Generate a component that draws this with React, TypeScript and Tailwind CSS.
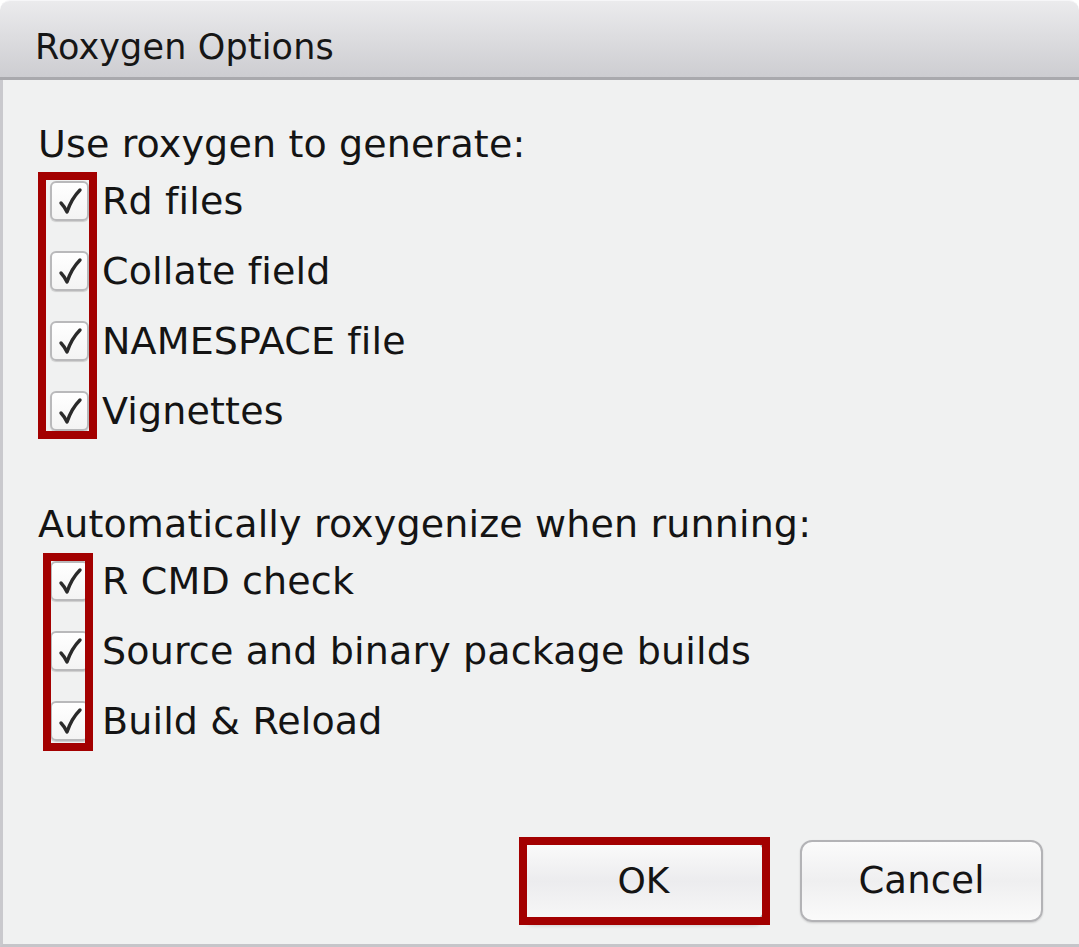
import React from "react";

function Check() {
  return (
    <div className="w-[39px] h-[40px] shrink-0 rounded-[6px] border-2 border-[#b9b9bb] bg-gradient-to-b from-white to-[#f4f4f4] shadow-[0_1px_1px_rgba(0,0,0,0.15)] flex items-center justify-center">
      <svg width="26" height="28" viewBox="0 0 26 28">
        <path d="M4 16 C6 18 8 21 10 25 C13 16 17 9 23 3" fill="none" stroke="#2a2a2a" strokeWidth="3.4" strokeLinecap="round" strokeLinejoin="round" />
      </svg>
    </div>
  );
}

function Row({ label }: { label: string }) {
  return (
    <div className="h-[70px] flex items-center">
      <div className="w-[64px] flex justify-start pl-[12px]">
        <Check />
      </div>
      <span className="leading-[44px]">{label}</span>
    </div>
  );
}

export default function App() {
  return (
    <div
      className="w-[1079px] h-[947px] bg-white text-[#141414] text-[38px] tracking-[0.15px] flex flex-col"
      style={{ fontFamily: '"DejaVu Sans", Verdana, sans-serif' }}
    >
      <div className="h-[80px] shrink-0 rounded-t-[10px] bg-gradient-to-b from-[#ebebed] via-[#dcdcdf] to-[#cdcdd1] border-t border-[#f6f6f8] border-b-[3px] border-b-[#a9a9ad] pl-[35px] pt-[17px]">
        <span className="text-[35px] leading-[40px] text-[#161616]">Roxygen Options</span>
      </div>
      <div className="relative flex-1 bg-[#f0f1f1] border-l-[3px] border-l-[#c9c9cd] border-b-[3px] border-b-[#c5c5c9] pl-[35px] pt-[42px] flex flex-col">
        <div className="leading-[44px]">Use roxygen to generate:</div>
        <Row label="Rd files" />
        <Row label="Collate field" />
        <Row label="NAMESPACE file" />
        <Row label="Vignettes" />
        <div className="h-[56px]" />
        <div className="leading-[44px]">Automatically roxygenize when running:</div>
        <Row label="R CMD check" />
        <Row label="Source and binary package builds" />
        <Row label="Build & Reload" />
        <div className="flex-1" />
        <div className="flex justify-end gap-[35px] pr-[36px] pb-[22px]">
          <div className="relative w-[243px] h-[82px] rounded-[12px] border-2 border-[#b3b3b6] bg-gradient-to-b from-[#fbfbfb] via-[#ececee] to-[#f7f7f7] flex items-center justify-center shadow-[0_3px_4px_rgba(0,0,0,0.2)]">
            <span className="text-[36px] leading-[44px]">OK</span>
            <div className="absolute left-[-5px] top-[-5px] w-[251px] h-[88px] border-[8px] border-[#a30000]" />
          </div>
          <div className="w-[243px] h-[82px] rounded-[12px] border-2 border-[#b3b3b6] bg-gradient-to-b from-[#fbfbfb] via-[#efeff0] to-[#fafafa] flex items-center justify-center shadow-[0_1px_2px_rgba(0,0,0,0.15)]">
            <span className="text-[37px] leading-[44px]">Cancel</span>
          </div>
        </div>
        <div className="absolute left-[35px] top-[92px] w-[59px] h-[267px] border-[8px] border-[#a30000]" />
        <div className="absolute left-[40px] top-[473px] w-[50px] h-[198px] border-[8px] border-[#a30000]" />
      </div>
    </div>
  );
}
